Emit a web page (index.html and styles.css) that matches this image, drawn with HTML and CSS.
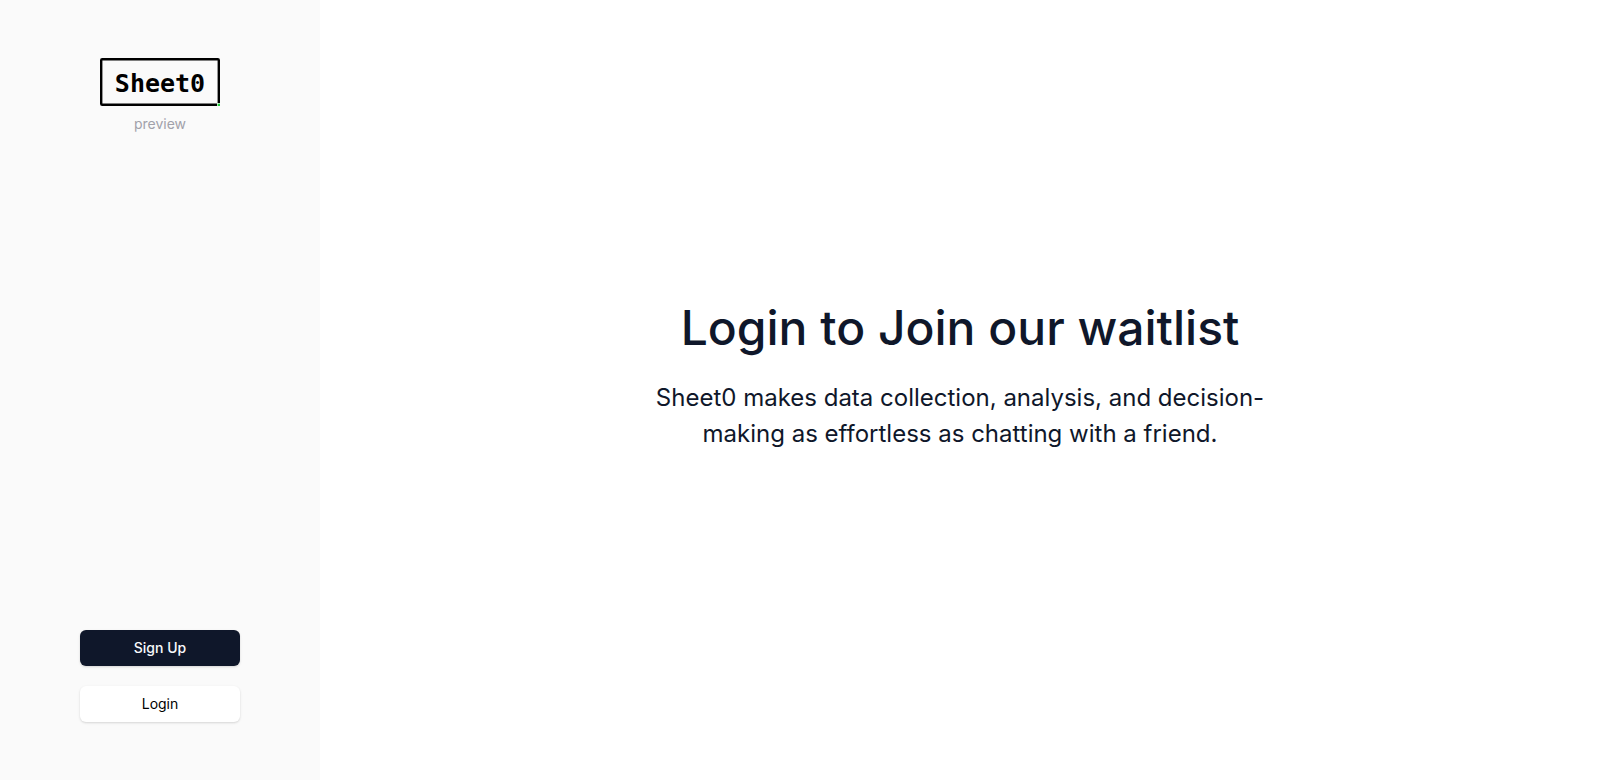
FILE: index.html
```html
<!DOCTYPE html>
<html lang="en">
<head>
    <meta charset="UTF-8">
    <meta name="viewport" content="width=device-width, initial-scale=1.0">
    <title>Sheet0</title>
    <link rel="stylesheet" href="styles.css">
</head>
<body>
    <aside class="sidebar">
        <div class="brand">
            <svg class="logo" viewBox="0 0 120 48" role="img" aria-label="Sheet0">
                <rect x="1.2" y="1.2" width="117.6" height="45.6" rx="1" fill="none" stroke="#000" stroke-width="2.4"/>
                <rect x="117" y="45" width="3" height="3" fill="#fafafa"/>
                <rect x="117.6" y="45.6" width="2.4" height="2.4" fill="#22c93a"/>
                <text class="logo-text" x="60" y="34" text-anchor="middle">Sheet0</text>
            </svg>
            <span class="tag">preview</span>
        </div>
        <div class="actions">
            <button class="btn btn-primary" type="button">Sign Up</button>
            <button class="btn btn-plain" type="button">Login</button>
        </div>
    </aside>

    <main class="content">
        <h1>Login to Join our waitlist</h1>
        <p>Sheet0 makes data collection, analysis, and decision-making as effortless as chatting with a friend.</p>
    </main>
</body>
</html>
```
FILE: styles.css
```css
* {
    box-sizing: border-box;
}
body {
    display: flex;
    min-height: 100vh;
    margin: 0;
    font-family: Inter, sans-serif;
    color: #0f172a;
    background: #fff;
}
.sidebar {
    display: flex;
    flex-direction: column;
    justify-content: space-between;
    align-items: center;
    width: 20%;
    padding: 58px 0;
    background: #fafafa;
}
.brand {
    display: flex;
    flex-direction: column;
    align-items: center;
    gap: 8px;
}
.logo {
    width: 120px;
    height: 48px;
}
.logo-text {
    font: bold 25px "DejaVu Sans Mono", monospace;
    fill: #000;
}
.tag {
    font-size: 14px;
    line-height: 20px;
    color: #a1a1aa;
}
.actions {
    display: flex;
    flex-direction: column;
    gap: 20px;
    width: 50%;
}
.btn {
    height: 36px;
    border: none;
    border-radius: 6px;
    font: 500 14px/20px Inter, sans-serif;
    cursor: pointer;
    box-shadow: 0 1px 3px rgba(0, 0, 0, 0.1), 0 1px 2px rgba(0, 0, 0, 0.06);
}
.btn-primary {
    background: #0f172a;
    color: #f8fafc;
}
.btn-plain {
    background: #fff;
    color: #000;
    font-weight: 400;
}
.content {
    flex: 1;
    display: flex;
    flex-direction: column;
    justify-content: center;
    align-items: center;
    gap: 22px;
    padding-bottom: 30px;
    text-align: center;
}
h1 {
    margin: 0;
    font-size: 48px;
    font-weight: 500;
    line-height: 60px;
}
p {
    max-width: 640px;
    margin: 0;
    font-size: 24px;
    font-weight: 400;
    line-height: 36px;
}
```
